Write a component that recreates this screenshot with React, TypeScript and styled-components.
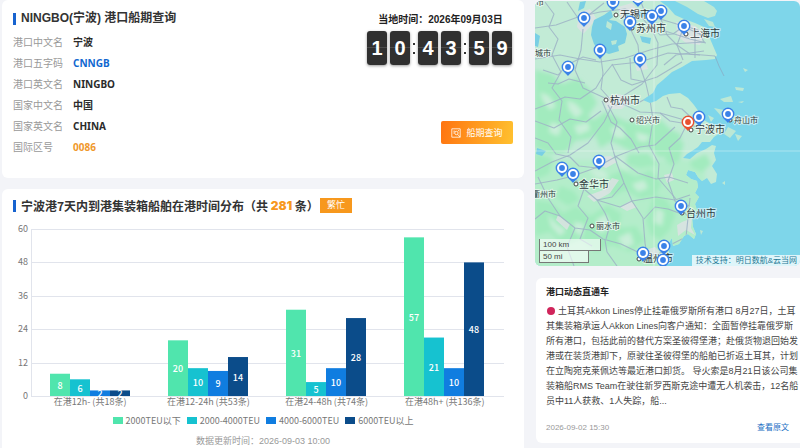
import React from 'react';
import styled, { createGlobalStyle } from 'styled-components';

const LATIN = '"Liberation Sans", "Noto Sans CJK SC", sans-serif';
const HUMANIST = '"Noto Sans", "Noto Sans CJK SC", sans-serif';
const CJK = '"Noto Sans CJK SC", sans-serif';

const GlobalStyle = createGlobalStyle`
  * { box-sizing: border-box; }
  body { margin: 0; background: #f3f4f8; color: #333; font-family: ${LATIN}; }
  h1, h2, p, dl, dd { margin: 0; }
`;

const Page = styled.div`
  display: grid;
  grid-template-columns: minmax(0, 1fr) 265px;
  gap: 11px;
  min-height: 100vh;
  padding-left: 2px;
`;

const Column = styled.div<{ $top?: number; $gap: number }>`
  display: flex;
  flex-direction: column;
  gap: ${(p) => p.$gap}px;
  padding-top: ${(p) => p.$top ?? 0}px;
`;

const PortCard = styled.section`
  display: flex;
  justify-content: space-between;
  min-height: 178px;
  padding: 11px 11px 0;
  border-radius: 6px;
  background: #fff;
`;

const ChartCard = styled.section`
  flex: 1;
  display: flex;
  flex-direction: column;
  padding: 9px 11px 0;
  border-radius: 6px 6px 0 0;
  background: #fff;
`;

const Heading = styled.h1<{ $font: string }>`
  display: flex;
  align-items: center;
  height: 15px;
  font: bold 12px/15px ${(p) => p.$font};
  color: #333;
  white-space: pre;
  &::before {
    content: '';
    width: 3px;
    height: 12px;
    margin-right: 5px;
    background: #1763cf;
  }
`;

const Total = styled.strong`
  font: 900 12px/15px Inter, sans-serif;
  color: #f7981d;
`;

const Badge = styled.span`
  height: 15px;
  margin-left: 1px;
  padding: 0 7px;
  background: #f7981d;
  color: #fff;
  font: 9px/14px ${CJK};
`;

const InfoList = styled.dl`
  margin-top: 6px;
`;

const InfoRow = styled.div`
  display: grid;
  grid-template-columns: 60px auto;
  font: 10px/21px ${HUMANIST};
`;

const InfoLabel = styled.dt`
  color: #999;
`;

const InfoValue = styled.dd<{ $color?: string }>`
  font-weight: bold;
  color: ${(p) => p.$color ?? '#2b2b2b'};
`;

const ClockSide = styled.div`
  display: flex;
  flex-direction: column;
  align-items: flex-end;
`;

const LocalDate = styled.p`
  width: 145px;
  margin-top: 1px;
  text-align: center;
  font: bold 10px/15px ${LATIN};
  color: #222;
`;

const Clock = styled.div`
  display: flex;
  margin-top: 4px;
  margin-right: 1px;
`;

const Pair = styled.div`
  display: flex;
  gap: 3px;
`;

const Digit = styled.span`
  width: 20px;
  height: 34px;
  border-radius: 3px;
  background: linear-gradient(#303030 0 16px, #4b4b4b 16px 17px, #303030 17px);
  box-shadow: 0 1px 3px rgba(0, 0, 0, 0.4);
  color: #fff;
  font: bold 20px/34px ${LATIN};
  text-align: center;
`;

const Colon = styled.span`
  display: flex;
  flex-direction: column;
  align-items: center;
  justify-content: center;
  gap: 7px;
  width: 8px;
  &::before, &::after {
    content: '';
    width: 2px;
    height: 2px;
    background: #333;
  }
`;

const QueryButton = styled.button`
  display: flex;
  align-items: center;
  justify-content: center;
  gap: 5px;
  width: 72px;
  height: 23px;
  margin-top: 56px;
  padding: 0;
  border: 0;
  border-radius: 2px;
  background: linear-gradient(100deg, #ff7410, #ffc12f);
  color: #fff;
  font: 9px/23px ${CJK};
`;

const ChartSvg = styled.svg`
  display: block;
  width: 100%;
  margin-top: 7px;
  font-family: ${CJK};
  font-size: 9px;
`;

const Legend = styled.div`
  display: flex;
  justify-content: center;
  gap: 6px;
  margin-top: 2px;
  font: 9px/13px ${CJK};
  color: #777;
`;

const LegendItem = styled.span`
  display: flex;
  align-items: center;
  gap: 3px;
`;

const Swatch = styled.i<{ $color: string }>`
  width: 10px;
  height: 7px;
  background: ${(p) => p.$color};
`;

const Updated = styled.p`
  margin-top: 8px;
  text-align: center;
  font: 9px/13px ${LATIN};
  color: #999;
`;

const MapPanel = styled.section`
  position: relative;
  height: 265px;
  border-radius: 6px;
  overflow: hidden;
`;

const MapSvg = styled.svg`
  display: block;
  width: 100%;
  height: 100%;
  font-family: ${CJK};
`;

const ScaleBox = styled.div`
  position: absolute;
  left: 4px;
  bottom: 3px;
`;

const ScaleLine = styled.div<{ $width: number }>`
  width: ${(p) => p.$width}px;
  height: 12px;
  padding-left: 3px;
  border: 1px solid #777;
  border-top: 0;
  background: rgba(255, 255, 255, 0.6);
  font: 8px/11px ${LATIN};
  color: #444;
`;

const Attribution = styled.a`
  position: absolute;
  right: 0;
  bottom: 0;
  padding: 0 3px 0 4px;
  background: rgba(255, 255, 255, 0.75);
  color: #1f7895;
  font: 8px/11px ${LATIN};
  text-decoration: none;
`;

const NewsCard = styled.article`
  min-height: 165px;
  margin-left: 1px;
  padding: 7px 1px 0 10px;
  border-radius: 6px 0 0 6px;
  background: #fff;
`;

const NewsTitle = styled.h2`
  font: bold 9px/14px ${LATIN};
  color: #222;
`;

const NewsBody = styled.p`
  margin-top: 5px;
  font: 9px/15px ${LATIN};
  color: #444;
`;

const RedDot = styled.i`
  display: inline-block;
  width: 8px;
  height: 8px;
  margin: 0 3px 0 1px;
  border-radius: 50%;
  background: #d0255b;
  vertical-align: -1px;
`;

const NewsFooter = styled.footer`
  display: flex;
  justify-content: space-between;
  margin-top: 12px;
  padding-right: 10px;
  font: 8px/14px ${LATIN};
  color: #999;
`;

const NewsLink = styled.a`
  color: #1b6fc4;
  text-decoration: none;
`;

const info: { label: string; value: string; color?: string }[] = [
  { label: '港口中文名', value: '宁波' },
  { label: '港口五字码', value: 'CNNGB', color: '#1168d0' },
  { label: '港口英文名', value: 'NINGBO' },
  { label: '国家中文名', value: '中国' },
  { label: '国家英文名', value: 'CHINA' },
  { label: '国际区号', value: '0086', color: '#f0982c' },
];

const series = [
  { name: '2000TEU以下', color: '#50e5ad' },
  { name: '2000-4000TEU', color: '#16c2d0' },
  { name: '4000-6000TEU', color: '#107de0' },
  { name: '6000TEU以上', color: '#0b4c8a' },
];

const groups = [
  { label: '在港12h- (共18条)', values: [8, 6, 2, 2] },
  { label: '在港12-24h (共53条)', values: [20, 10, 9, 14] },
  { label: '在港24-48h (共74条)', values: [31, 5, 10, 28] },
  { label: '在港48h+ (共136条)', values: [57, 21, 10, 48] },
];

const PLOT = { left: 18, right: 491, top: 9, bottom: 176, max: 60 };

function StayChart() {
  const unit = (PLOT.bottom - PLOT.top) / PLOT.max;
  const slot = (PLOT.right - PLOT.left) / groups.length;
  return (
    <ChartSvg viewBox="0 0 500 192" role="img" aria-label="船舶在港时间分布">
      {[0, 12, 24, 36, 48, 60].map((t) => {
        const y = Math.round(PLOT.bottom - t * unit);
        return (
          <g key={t}>
            <rect x={PLOT.left} y={y} width={PLOT.right - PLOT.left} height="1" fill="#e1e4ec" />
            <text x={PLOT.left - 3} y={y + 3} textAnchor="end" fill="#777">{t}</text>
          </g>
        );
      })}
      <rect x={PLOT.left} y={PLOT.top} width="1" height={PLOT.bottom - PLOT.top} fill="#e1e4ec" />
      {groups.map((g, gi) => {
        const mid = PLOT.left + slot * (gi + 0.5);
        const start = Math.floor(mid - 40);
        return (
          <g key={g.label}>
            {g.values.map((v, i) => {
              const h = v * unit;
              const x = start + i * 20;
              return (
                <g key={series[i].name}>
                  <rect x={x} y={PLOT.bottom - h} width="20" height={h} fill={series[i].color} />
                  <text x={x + 10} y={PLOT.bottom - h / 2 + 4} textAnchor="middle" fill="#fff" fontWeight="500">{v}</text>
                </g>
              );
            })}
            <text x={mid} y={PLOT.bottom + 9} textAnchor="middle" fill="#777">{g.label}</text>
          </g>
        );
      })}
    </ChartSvg>
  );
}

/* Map drawing units: one unit per pixel, origin offset by (535, 1). */
const LAND =
  'M535 1H660L668 7 675 15 684 19 695 23 704 27 708 33 711 41 714 48 717 55 715 59 706 60 692 61 682 67 672 72 663 80 657 85 653 93 647 97 643 100 650 103 656 101 663 96 669 94 680 93 688 98 694 105 699 112 702 119 709 123 718 127 726 128 720 133 714 137 710 142 702 142 698 147 692 151 687 154 683 158 690 159 697 153 706 149 712 145 716 146 714 153 716 160 712 166 717 174 716 182 711 184 707 178 702 181 698 177 695 172 688 170 686 175 691 179 697 181 698 187 695 193 699 197 695 204 697 210 692 217 693 227 696 234 694 239 688 234 684 236 679 244 673 246 672 238 668 244 669 253 662 258 663 266H535Z';

const hills = [
  'M535 70L552 74 562 84 578 78 590 90 597 103 588 116 598 124 592 138 575 141 566 152 550 154 535 148Z',
  'M590 122L606 112 625 121 648 126 661 120 670 129 682 135 676 150 660 158 648 147 630 151 612 141 600 148Z',
  'M600 180L622 170 636 177 650 170 662 183 655 196 641 199 625 190 612 197Z',
  'M535 200L550 202 563 213 576 206 590 216 608 205 622 214 618 228 636 226 645 240 630 252 612 245 596 252 582 239 563 246 550 232 535 236Z',
  'M654 195L666 199 676 214 670 230 660 240 650 234 646 220Z',
  'M628 154L648 153 658 165 640 168 626 164Z',
  'M535 152L553 158 549 174 535 180Z',
  'M560 186L574 191 580 200 568 206 556 198Z',
  'M672 140L684 142 680 160 671 166 664 158Z',
  'M690 161L706 154 711 164 702 172 692 168Z',
];

const valleys = [
  'M540 92L549 96 556 106 550 110 543 101Z',
  'M567 100L576 104 583 112 576 118 569 110Z',
  'M551 122L562 126 558 136 549 132Z',
  'M574 126L588 122 590 130 578 135Z',
  'M610 128L622 126 626 138 615 138Z',
  'M636 132L650 136 646 142 638 141Z',
  'M588 168L604 170 610 180 596 178Z',
  'M632 184L644 180 648 188 638 192Z',
  'M548 214L556 224 566 230 560 236 551 226Z',
  'M596 220L606 214 612 226 600 234Z',
  'M618 238L630 232 634 244 624 248Z',
  'M656 208L664 212 662 226 654 222Z',
  'M574 222L584 224 582 236 575 232Z',
  'M614 156L624 160 630 172 620 168Z',
];

const urban = [
  'M579 12L590 9 596 18 590 27 583 34 577 27Z',
  'M676 22L695 26 705 34 700 45 686 43 677 36Z',
  'M603 98L620 94 630 101 622 109 607 109Z',
  'M682 222L692 218 691 228 695 235 686 230 678 236 677 225Z',
  'M597 157L611 156 617 162 606 168 598 165Z',
  'M558 215L570 224 567 230 556 220Z',
  'M618 7L632 3 640 13 630 20 620 17Z',
  'M587 196L603 190 612 178 619 180 610 193 594 202Z',
  'M642 251L655 247 660 252 650 259Z',
  'M620 207L630 201 637 207 627 211Z',
  'M635 65L646 62 648 69 637 71Z',
  'M664 175L672 173 674 180 667 183Z',
];

const water = [
  'M592 27L594 20 604 15 611 10 613 17 609 20 616 21 625 27 627 34 625 43 618 46 619 51 609 54 600 51 594 44 591 35Z',
  'M580 2L586 1 584 8 578 11Z',
  'M625 13L635 16 636 23 627 22Z',
  'M640 36L651 38 650 44 642 42Z',
  'M535 33L540 36 538 47 535 46Z',
  'M537 148L546 151 542 156 536 154Z',
  'M640 10L646 14 643 18 637 14Z',
];

const islands = [
  'M675 1H704L714 7 717 11 715 16 708 18 698 14 687 7Z',
  'M704 19L713 22 715 27 709 26Z',
  'M720 99L731 96 733 102 724 102Z',
  'M735 87L744 88 743 91 736 90Z',
  'M743 68L748 70 745 72Z',
  'M714 108L724 110 733 114 738 119 730 122 722 117Z',
  'M738 118L746 119 743 124 736 123Z',
  'M708 115L714 118 711 122Z',
  'M728 127L736 131 730 138 724 134Z',
  'M735 134L742 136 738 141Z',
  'M722 183L725 181 725 185Z',
  'M700 230L703 231 701 235Z',
  'M738 102L744 101 742 103Z',
];

const roads = [
  'M535 28L556 25 578 17 600 12 625 9 650 16 680 25 704 36',
  'M535 59L560 55 580 59 600 62 625 58 650 50 672 44 705 42',
  'M535 109L551 103 565 97 580 99 596 88 603 76 612 65 640 62 668 53 700 55',
  'M600 51L603 73 601 89 610 99 625 105 640 112 660 113 688 121',
  'M583 29L581 50 575 70 583 88 607 99',
  'M543 70L558 75 567 65 583 57 596 60',
  'M630 28L638 45 640 66 646 84 649 97 638 103 614 105',
  'M660 17L667 35 677 45 690 54 715 56',
  'M640 15L652 30 658 43 657 65 642 84 620 98',
  'M535 171L552 162 570 155 588 143 604 122 612 106',
  'M535 184L557 180 573 176 595 168 617 156 640 147 655 145 675 127',
  'M608 105L617 122 611 143 617 164 624 183 632 201 643 218 645 243 648 260',
  'M538 177L548 198 560 216 575 228 590 230 603 239 621 244 644 255',
  'M573 176L584 189 597 200 620 207 632 201 656 197 675 200 690 195',
  'M584 189L578 206 588 218 580 239 592 246',
  'M688 122L680 138 669 148 674 164 668 181 675 201 690 219',
  'M650 100L653 120 649 145 659 164 658 178 676 199',
  'M615 156L638 173 656 179 669 177 688 183',
  'M535 121L554 128 570 119 586 122 601 111',
  'M545 2L554 14 549 27 558 39 552 55 561 72 552 88 562 101 559 120 571 137 568 153',
  'M567 2L578 18 590 14 604 3',
  'M641 2L648 21 660 35 673 34 684 26 698 30 704 42',
  'M612 64L621 80 632 85 657 77 682 62',
  'M667 97L671 107 682 109 695 121',
  'M660 113L670 121 688 124 705 130',
  'M644 219L655 207 668 209 679 213 689 205',
  'M690 198L688 218 686 237 672 244 659 254 642 257',
  'M535 219L545 211 560 216',
  'M575 228L567 247 574 266',
  'M605 240L607 252 617 266',
  'M597 200L605 213 610 225 606 239',
  'M624 183L612 197 597 200',
  'M535 138L548 143 556 154 570 157 579 166 597 168',
  'M639 153L631 139 620 128 611 122 602 101',
  'M683 29L677 45 683 60',
  'M695 30L695 58',
  'M665 31L690 39 706 43',
  'M664 65L676 55 704 51',
  'M630 58L631 79 646 82',
  'M585 83L569 79 558 84 548 83',
];

const cities: { name: string; x: number; y: number; size: 8 | 10; dot?: [number, number] }[] = [
  { name: '市', x: 536, y: 5, size: 8 },
  { name: '无锡市', x: 620, y: 18, size: 10, dot: [616, 15] },
  { name: '苏州市', x: 636, y: 32, size: 10, dot: [632, 28] },
  { name: '上海市', x: 690, y: 37, size: 10, dot: [686, 34] },
  { name: '城市', x: 535, y: 56, size: 8 },
  { name: '杭州市', x: 610, y: 104, size: 10, dot: [606, 100] },
  { name: '绍兴市', x: 636, y: 123, size: 8, dot: [632, 120] },
  { name: '宁波市', x: 695, y: 133, size: 10, dot: [691, 130] },
  { name: '舟山市', x: 734, y: 123, size: 8, dot: [730, 120] },
  { name: '金华市', x: 579, y: 188, size: 10, dot: [576, 184] },
  { name: '衢州市', x: 532, y: 197, size: 8 },
  { name: '丽水市', x: 596, y: 229, size: 8, dot: [592, 226] },
  { name: '台州市', x: 686, y: 217, size: 10, dot: [682, 213] },
  { name: '温州市', x: 643, y: 262, size: 10, dot: [639, 259] },
];

const pins: [number, number][] = [
  [584, 18], [613, 2], [638, -2], [630, 22], [661, 11], [652, 16], [684, 26], [600, 50], [640, 59], [568, 67],
  [699, 117], [728, 114], [599, 161], [562, 168], [573, 174], [681, 206], [643, 253], [664, 246], [663, 260],
];

function Pin({ x, y, color }: { x: number; y: number; color: string }) {
  return (
    <g transform={`translate(${x} ${y})`}>
      <path d="M0 9C-2 6-6.4 4.4-6.4 0A6.4 6.4 0 1 1 6.4 0C6.4 4.4 2 6 0 9Z" fill={color} />
      <circle r="5" fill="#fff" />
      <circle r="2.9" fill={color} />
    </g>
  );
}

function PortMap() {
  return (
    <MapPanel aria-label="港口地图">
      <MapSvg viewBox="535 1 265 265" preserveAspectRatio="xMidYMid slice">
        <defs>
          <clipPath id="land"><path d={LAND} /></clipPath>
          <filter id="soft" x="-10%" y="-10%" width="120%" height="120%"><feGaussianBlur stdDeviation="2" /></filter>
        </defs>
        <rect x="535" y="1" width="265" height="265" fill="#7ed6ea" />
        <path d={LAND} fill="#c2ebd6" />
        <g clipPath="url(#land)">
          <g filter="url(#soft)">
            <rect x="525" y="160" width="180" height="116" fill="#b4edca" />
            {hills.map((d) => <path key={d} d={d} fill="#a2ebbe" />)}
            {valleys.map((d) => <path key={d} d={d} fill="#c9efd9" />)}
          </g>
          {urban.map((d) => <path key={d} d={d} fill="#dfe1e5" opacity=".8" />)}
          {roads.map((d) => (
            <path key={d} d={d} fill="none" stroke="#9db3c6" strokeWidth="1.1" strokeLinejoin="round" opacity=".85" />
          ))}
        </g>
        {water.map((d) => <path key={d} d={d} fill="#79cfe4" />)}
        {islands.map((d) => <path key={d} d={d} fill="#bce8d5" />)}
        <path d="M607 21L612 24 611 30 606 27ZM611 41L617 40 616 44 612 45Z" fill="#bce8d5" />
        <path d="M715 56L719 66 724 76" fill="none" stroke="#86b5cd" strokeWidth="1" />
        <path d="M654 1V266M535 151H800" stroke="#fff" strokeWidth="1" opacity=".35" />
        {cities.map((c) => (
          <g key={c.name + c.x}>
            {c.dot && <circle cx={c.dot[0]} cy={c.dot[1]} r="2" fill="#fff" stroke="#444" strokeWidth="1" />}
            <text
              x={c.x} y={c.y} fontSize={c.size} fill="#303c40"
              stroke="#fff" strokeWidth="2" strokeOpacity=".55" paintOrder="stroke"
            >
              {c.name}
            </text>
          </g>
        ))}
        {pins.map(([x, y]) => <Pin key={`${x}-${y}`} x={x} y={y} color="#3b82e8" />)}
        <Pin x={688} y={122} color="#e8502f" />
      </MapSvg>
      <ScaleBox>
        <ScaleLine $width={62}>100 km</ScaleLine>
        <ScaleLine $width={50}>50 mi</ScaleLine>
      </ScaleBox>
      <Attribution href="#support">技术支持：明日数航&amp;云当网</Attribution>
    </MapPanel>
  );
}

function ScheduleIcon() {
  return (
    <svg width="10" height="10" viewBox="0 0 10 10" fill="none" stroke="#fff" strokeWidth=".8" aria-hidden="true">
      <path d="M9.2 9.2V.8H.8V9.2ZM2.3 3.2H4.2M2.3 5H3.4" />
      <circle cx="5.4" cy="5" r="1.7" />
      <path d="M6.6 6.3L9.2 9.2M7 2.6H8" />
    </svg>
  );
}

export default function App() {
  return (
    <>
      <GlobalStyle />
      <Page>
        <Column $gap={11}>
          <PortCard>
            <div>
              <Heading $font={LATIN}>NINGBO(宁波) 港口船期查询</Heading>
              <InfoList>
                {info.map((row) => (
                  <InfoRow key={row.label}>
                    <InfoLabel>{row.label}</InfoLabel>
                    <InfoValue $color={row.color}>{row.value}</InfoValue>
                  </InfoRow>
                ))}
              </InfoList>
            </div>
            <ClockSide>
              <LocalDate>当地时间：2026年09月03日</LocalDate>
              <Clock role="timer">
                <Pair><Digit>1</Digit><Digit>0</Digit></Pair>
                <Colon />
                <Pair><Digit>4</Digit><Digit>3</Digit></Pair>
                <Colon />
                <Pair><Digit>5</Digit><Digit>9</Digit></Pair>
              </Clock>
              <QueryButton type="button"><ScheduleIcon />船期查询</QueryButton>
            </ClockSide>
          </PortCard>
          <ChartCard>
            <Heading as="h2" $font={CJK}>
              宁波港7天内到港集装箱船舶在港时间分布（共 <Total>281</Total> 条）<Badge>繁忙</Badge>
            </Heading>
            <StayChart />
            <Legend>
              {series.map((s) => (
                <LegendItem key={s.name}><Swatch $color={s.color} />{s.name}</LegendItem>
              ))}
            </Legend>
            <Updated>数据更新时间：2026-09-03 10:00</Updated>
          </ChartCard>
        </Column>
        <Column $top={1} $gap={12}>
          <PortMap />
          <NewsCard>
            <NewsTitle>港口动态直通车</NewsTitle>
            <NewsBody>
              <RedDot />土耳其Akkon Lines停止挂靠俄罗斯所有港口 8月27日，土耳其集装箱承运人Akkon Lines向客户通知：全面暂停挂靠俄罗斯所有港口，包括此前的替代方案圣彼得堡港；赴俄货物退回始发港或在装货港卸下，原驶往圣彼得堡的船舶已折返土耳其，计划在立陶宛克莱佩达等最近港口卸货。 导火索是8月21日该公司集装箱船RMS Team在驶往新罗西斯克途中遭无人机袭击，12名船员中11人获救、1人失踪，船...
            </NewsBody>
            <NewsFooter>
              <time>2026-09-02 15:30</time>
              <NewsLink href="#news">查看原文</NewsLink>
            </NewsFooter>
          </NewsCard>
        </Column>
      </Page>
    </>
  );
}
